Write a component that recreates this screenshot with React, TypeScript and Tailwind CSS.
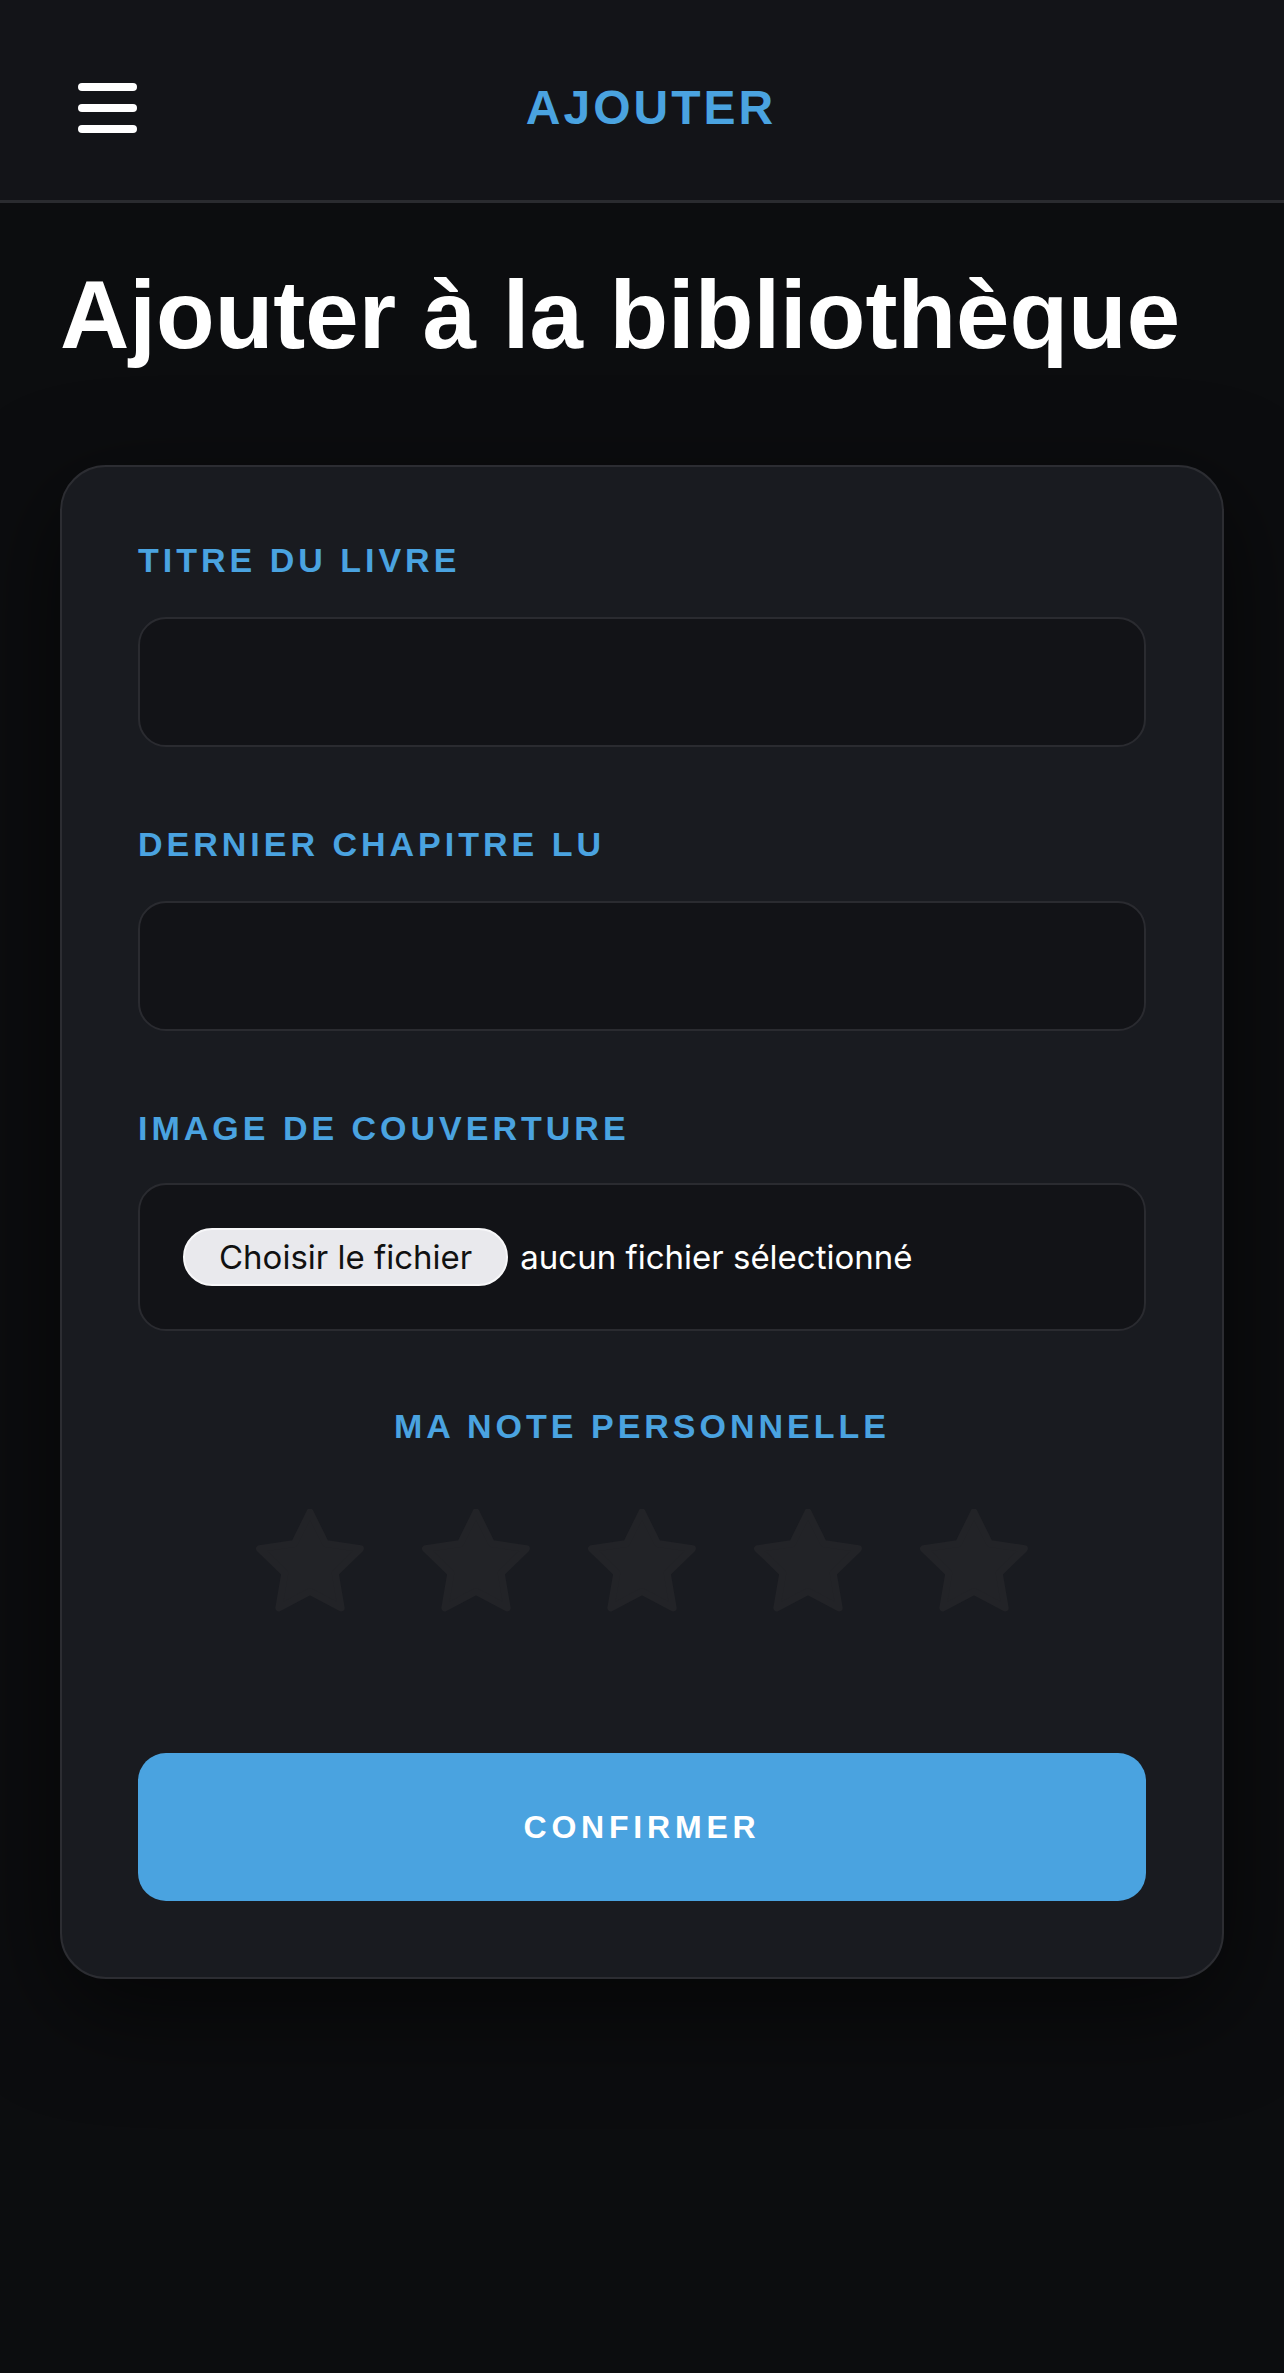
import React from "react";

const STAR_POINTS = Array.from({ length: 10 }, (_, i) => {
  const angle = ((-90 + i * 36) * Math.PI) / 180;
  const radius = i % 2 === 0 ? 53 : 26.5;
  return `${(54 + radius * Math.cos(angle)).toFixed(2)},${(56 + radius * Math.sin(angle)).toFixed(2)}`;
}).join(" ");

function Star() {
  return (
    <svg width="108" height="104" viewBox="0 0 108 104" aria-hidden="true">
      <polygon
        points={STAR_POINTS}
        fill="#222327"
        stroke="#222327"
        strokeWidth="7"
        strokeLinejoin="round"
      />
    </svg>
  );
}

function FieldLabel({ children, center }: { children: React.ReactNode; center?: boolean }) {
  return (
    <label
      className={
        center
          ? "block text-center font-['Liberation_Sans',Arial,sans-serif] text-[34px] font-bold uppercase leading-none tracking-[4px] text-[#4aa3e0]"
          : "block font-['Liberation_Sans',Arial,sans-serif] text-[34px] font-bold uppercase leading-none tracking-[4px] text-[#4aa3e0]"
      }
    >
      {children}
    </label>
  );
}

function TextField({ label }: { label: string }) {
  return (
    <div className="flex flex-col gap-[40px]">
      <FieldLabel>{label}</FieldLabel>
      <input
        type="text"
        className="h-[130px] w-full rounded-[28px] border-2 border-[#2a2b30] bg-[#121317] px-[40px] text-[34px] text-white outline-none"
      />
    </div>
  );
}

export default function App() {
  return (
    <div className="min-h-[2373px] bg-[#0c0d0f] font-['Liberation_Sans',Arial,sans-serif] text-white">
      <header className="flex h-[203px] items-center border-b-[3px] border-[#2a2b2f] bg-[#131418] px-[78px] pt-[16px]">
        <button className="flex w-[59px] flex-col gap-[13px]" aria-label="Menu">
          <span className="block h-[8px] w-[59px] rounded-full bg-white" />
          <span className="block h-[8px] w-[59px] rounded-full bg-white" />
          <span className="block h-[8px] w-[59px] rounded-full bg-white" />
        </button>
        <h2 className="flex-1 text-center text-[48px] font-bold leading-none tracking-[3px] text-[#4aa3e0]">
          AJOUTER
        </h2>
        <div className="w-[41px]" />
      </header>

      <main className="px-[60px] pt-[64px]">
        <h1 className="text-[96px] font-bold leading-none text-white">Ajouter à la bibliothèque</h1>

        <form className="mt-[102px] flex flex-col rounded-[46px] border-2 border-[#2c2d32] bg-[#191b20] p-[76px] shadow-[0_30px_100px_rgba(0,0,0,0.6)]">
          <div className="flex flex-col gap-[80px]">
            <TextField label="Titre du livre" />
            <TextField label="Dernier chapitre lu" />
            <div className="flex flex-col gap-[38px]">
              <FieldLabel>Image de couverture</FieldLabel>
              <div className="flex items-center gap-[12px] rounded-[28px] border-2 border-[#2a2b30] bg-[#121317] px-[43px] py-[43px] font-['Inter',sans-serif] text-[33px]">
                <span className="flex h-[58px] items-center rounded-full border-2 border-[#f7f7f9] bg-[#e9e9ed] px-[34px] leading-none text-[#111]">
                  Choisir le fichier
                </span>
                <span className="leading-none text-white">aucun fichier sélectionné</span>
              </div>
            </div>
          </div>

          <div className="mt-[78px] flex flex-col items-center gap-[66px]">
            <FieldLabel center>Ma note personnelle</FieldLabel>
            <div className="flex gap-[58px]">
              <Star />
              <Star />
              <Star />
              <Star />
              <Star />
            </div>
          </div>

          <button
            type="button"
            className="mt-[140px] h-[148px] w-full rounded-[28px] bg-[#4aa3e0] text-[32px] font-bold uppercase tracking-[4.8px] text-white"
          >
            Confirmer
          </button>
        </form>
      </main>
    </div>
  );
}
